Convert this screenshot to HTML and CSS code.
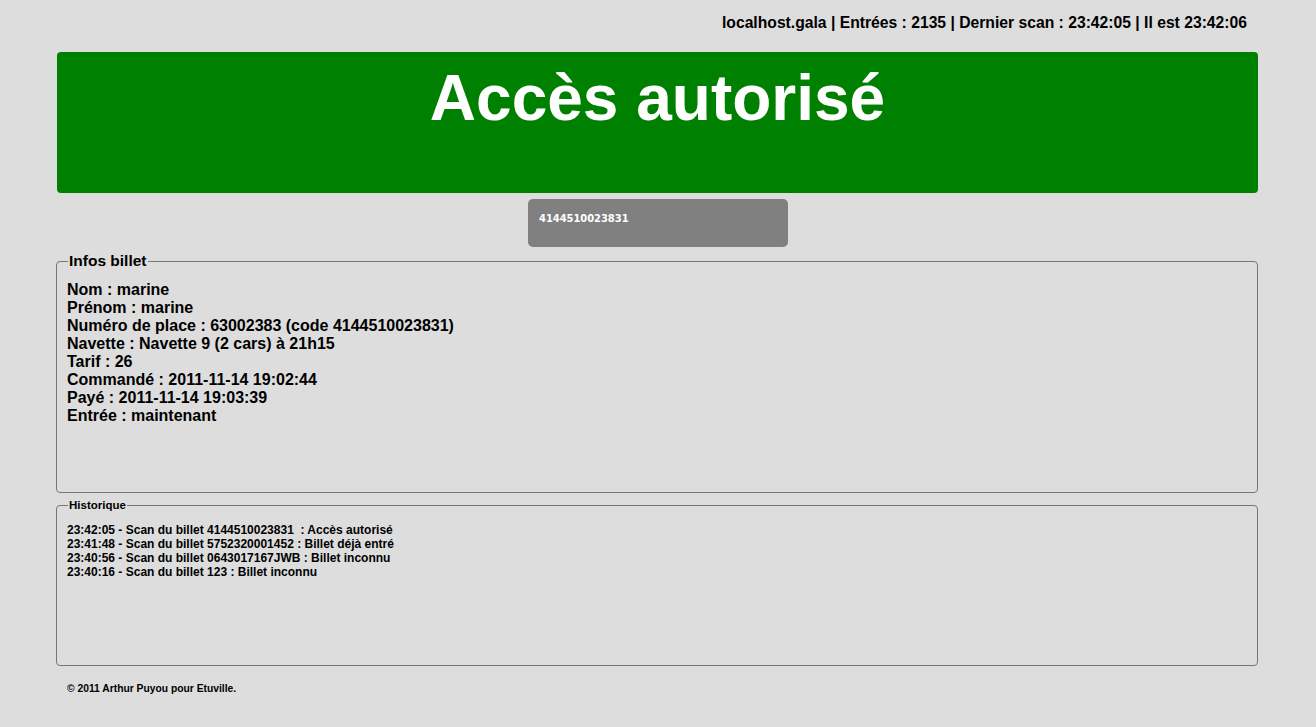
FILE: index.html
```html
<!DOCTYPE html>
<html lang="fr">
<head>
<meta charset="utf-8">
<title>Contrôle d'accès</title>
<link rel="stylesheet" href="styles.css">
</head>
<body>
<div class="page">
  <div class="topbar">localhost.gala | Entrées : 2135 | Dernier scan : 23:42:05 | Il est 23:42:06</div>
  <div class="status">
    <h1 class="status-title">Accès autorisé</h1>
  </div>
  <div class="scan-box">
    <div class="scan-code">4144510023831</div>
  </div>
  <fieldset class="panel panel-infos">
    <legend class="panel-legend">Infos billet</legend>
    <div class="infos">
      <div>Nom : marine</div>
      <div>Prénom : marine</div>
      <div>Numéro de place : 63002383 (code 4144510023831)</div>
      <div>Navette : Navette 9 (2 cars) à 21h15</div>
      <div>Tarif : 26</div>
      <div>Commandé : 2011-11-14 19:02:44</div>
      <div>Payé : 2011-11-14 19:03:39</div>
      <div>Entrée : maintenant</div>
    </div>
  </fieldset>
  <fieldset class="panel panel-history">
    <legend class="panel-legend small">Historique</legend>
    <div class="history">
      <div>23:42:05 - Scan du billet 4144510023831&nbsp; : Accès autorisé</div>
      <div>23:41:48 - Scan du billet 5752320001452 : Billet déjà entré</div>
      <div>23:40:56 - Scan du billet 0643017167JWB : Billet inconnu</div>
      <div>23:40:16 - Scan du billet 123 : Billet inconnu</div>
    </div>
  </fieldset>
  <div class="footer">© 2011 Arthur Puyou pour Etuville.</div>
</div>
</body>
</html>
```

FILE: styles.css
```css
html, body {
  margin: 0;
  padding: 0;
  background: #dddddd;
}
body {
  font-family: "Liberation Sans", Arial, Helvetica, sans-serif;
  font-weight: bold;
  color: #000;
  width: 1316px;
  height: 727px;
  overflow: hidden;
}
.page {
  display: flex;
  flex-direction: column;
  padding: 0 58px 0 56px;
}
.topbar {
  height: 52px;
  box-sizing: border-box;
  padding-top: 14px;
  padding-right: 11px;
  text-align: right;
  font-size: 15.7px;
  line-height: 18px;
}
.status {
  margin-left: 1px;
  height: 141px;
  background: #008000;
  border-radius: 4px;
  box-sizing: border-box;
  padding-top: 9px;
}
.status-title {
  margin: 0;
  text-align: center;
  color: #fff;
  font-size: 64px;
  font-weight: bold;
  line-height: 74px;
}
.scan-box {
  align-self: center;
  margin-top: 6px;
  margin-left: 2px;
  width: 260px;
  height: 48px;
  box-sizing: border-box;
  background: #808080;
  border-radius: 5px;
  padding: 13px 11px 0;
}
.scan-code {
  font-family: "DejaVu Sans Condensed", "DejaVu Sans", sans-serif;
  font-stretch: condensed;
  font-size: 11px;
  line-height: 14px;
  color: #fff;
}
.panel {
  margin: 0;
  border: 1px solid #777;
  border-radius: 4px;
  padding: 0 10px;
  min-width: 0;
}
.panel-legend {
  padding: 0 1px;
  margin-left: 1px;
  font-size: 15.5px;
  line-height: 18px;
}
.panel-legend.small {
  font-size: 11.5px;
  line-height: 13px;
}
.panel-infos {
  margin-top: 5px;
  height: 241px;
  box-sizing: border-box;
}
.infos {
  padding-top: 11px;
  font-size: 16px;
  line-height: 18px;
}
.panel-history {
  margin-top: 6px;
  height: 167px;
  box-sizing: border-box;
}
.history {
  padding-top: 11px;
  font-size: 12px;
  line-height: 14px;
}
.footer {
  padding: 17px 0 0 11px;
  font-size: 10.3px;
  line-height: 12px;
}
```
